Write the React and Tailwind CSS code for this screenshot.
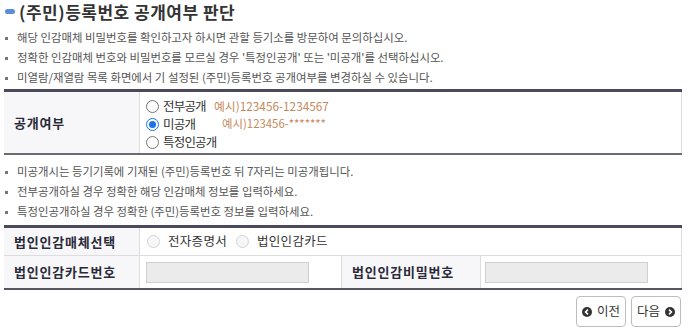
import React from "react";

const font = { fontFamily: '"Noto Sans CJK KR", "Noto Sans", sans-serif' };

const Bullet = ({ children }) => (
  <li className="flex items-center h-[20px] text-[11.4px] text-[#555]">
    <span className="w-[3px] h-[3px] bg-[#777] ml-[1px] mr-[9px] shrink-0" />
    <span className="whitespace-nowrap">{children}</span>
  </li>
);

const Radio = ({ checked, disabled }) => {
  if (disabled) {
    return <span className="inline-block w-[13px] h-[13px] rounded-full border border-[#d4d4d4] bg-[#f6f6f6] shrink-0" />;
  }
  return checked ? (
    <span className="inline-flex items-center justify-center w-[13px] h-[13px] rounded-full border border-[#1a73e8] bg-white shrink-0">
      <span className="w-[7px] h-[7px] rounded-full bg-[#1a73e8]" />
    </span>
  ) : (
    <span className="inline-block w-[13px] h-[13px] rounded-full border border-[#767676] bg-white shrink-0" />
  );
};

const Circle = ({ dir }) => (
  <svg width="10" height="10" viewBox="0 0 10 10" className="shrink-0">
    <circle cx="5" cy="5" r="5" fill="#333" />
    {dir === "left" ? (
      <path d="M6 2.6 L3.6 5 L6 7.4" stroke="#fff" strokeWidth="1.6" fill="none" />
    ) : (
      <path d="M4 2.6 L6.4 5 L4 7.4" stroke="#fff" strokeWidth="1.6" fill="none" />
    )}
  </svg>
);

const Label = ({ children, className = "" }) => (
  <div
    className={`flex items-center pl-[10px] bg-[#f7f7f9] text-[13px] font-bold text-[#2a2a3a] tracking-[0.8px] ${className}`}
  >
    {children}
  </div>
);

export default function App() {
  return (
    <div className="w-[688px] h-[331px] bg-white pl-[4px] pr-[6px] overflow-hidden" style={font}>
      {/* title */}
      <div className="flex items-center h-[22px]">
        <span className="w-[10px] h-[5px] rounded-full bg-[#5b8ed6] ml-[1px] mr-[4px]" />
        <h2 className="text-[17px] font-bold text-[#333] tracking-[0.5px] leading-none">
          (주민)등록번호 공개여부 판단
        </h2>
      </div>

      <ul className="mt-[6px]">
        <Bullet>해당 인감매체 비밀번호를 확인하고자 하시면 관할 등기소를 방문하여 문의하십시오.</Bullet>
        <Bullet>정확한 인감매체 번호와 비밀번호를 모르실 경우 '특정인공개' 또는 '미공개'를 선택하십시오.</Bullet>
        <Bullet>미열람/재열람 목록 화면에서 기 설정된 (주민)등록번호 공개여부를 변경하실 수 있습니다.</Bullet>
      </ul>

      {/* table 1 */}
      <div className="mt-[1px] border-t-[3px] border-[#4b4a5c] border-b-2 border-b-[#6b6b74] grid grid-cols-[135px_1fr]">
        <Label className="h-[61px]">공개여부</Label>
        <div className="border-l border-r border-[#dddddd] pl-[6px] pt-[5px] flex flex-col text-[12.5px] text-[#333] tracking-[-0.8px]">
          <div className="flex items-center h-[18px]">
            <Radio />
            <span className="ml-[4px] w-[51px]">전부공개</span>
            <span className="text-[11.8px] text-[#c48a5c] tracking-[0px]">예시)123456-1234567</span>
          </div>
          <div className="flex items-center h-[18px]">
            <Radio checked />
            <span className="ml-[4px] w-[59px]">미공개</span>
            <span className="text-[11.4px] text-[#c48a5c] tracking-[0px]">예시)123456-*******</span>
          </div>
          <div className="flex items-center h-[18px]">
            <Radio />
            <span className="ml-[4px]">특정인공개</span>
          </div>
        </div>
      </div>

      <ul className="mt-[7px]">
        <Bullet>미공개시는 등기기록에 기재된 (주민)등록번호 뒤 7자리는 미공개됩니다.</Bullet>
        <Bullet>전부공개하실 경우 정확한 해당 인감매체 정보를 입력하세요.</Bullet>
        <Bullet>특정인공개하실 경우 정확한 (주민)등록번호 정보를 입력하세요.</Bullet>
      </ul>

      {/* table 2 */}
      <div className="mt-[3px] border-t-[3px] border-[#4b4a5c] border-b-2 border-b-[#55555f] grid grid-cols-[135px_203px_138px_1fr]">
        <Label className="h-[28px] border-b border-[#dddddd]">법인인감매체선택</Label>
        <div className="col-span-3 flex items-center pl-[7px] border-l border-r border-b border-[#dddddd] text-[12.5px] text-[#333] tracking-[0.3px]">
          <Radio disabled />
          <span className="ml-[8px] mr-[9px]">전자증명서</span>
          <Radio disabled />
          <span className="ml-[8px]">법인인감카드</span>
        </div>

        <Label className="h-[32px]">법인인감카드번호</Label>
        <div className="flex items-center pl-[6px] border-l border-r border-[#dddddd]">
          <div className="w-[163px] h-[21px] bg-[#ebebeb] border border-[#cfcfcf]" />
        </div>
        <Label className="h-[32px]">법인인감비밀번호</Label>
        <div className="flex items-center pl-[4px] border-l border-r border-[#dddddd]">
          <div className="w-[163px] h-[21px] bg-[#ebebeb] border border-[#cfcfcf]" />
        </div>
      </div>

      {/* buttons */}
      <div className="flex justify-end gap-[5px] mt-[6px] pr-[1px]">
        <button className="flex items-center justify-center gap-[5px] w-[50px] h-[31px] rounded-[4px] border border-[#bdbdbd] bg-white text-[12.5px] text-[#333]">
          <Circle dir="left" />
          <span>이전</span>
        </button>
        <button className="flex items-center justify-center gap-[5px] w-[50px] h-[31px] rounded-[4px] border border-[#bdbdbd] bg-white text-[12.5px] text-[#333]">
          <span>다음</span>
          <Circle dir="right" />
        </button>
      </div>
    </div>
  );
}
